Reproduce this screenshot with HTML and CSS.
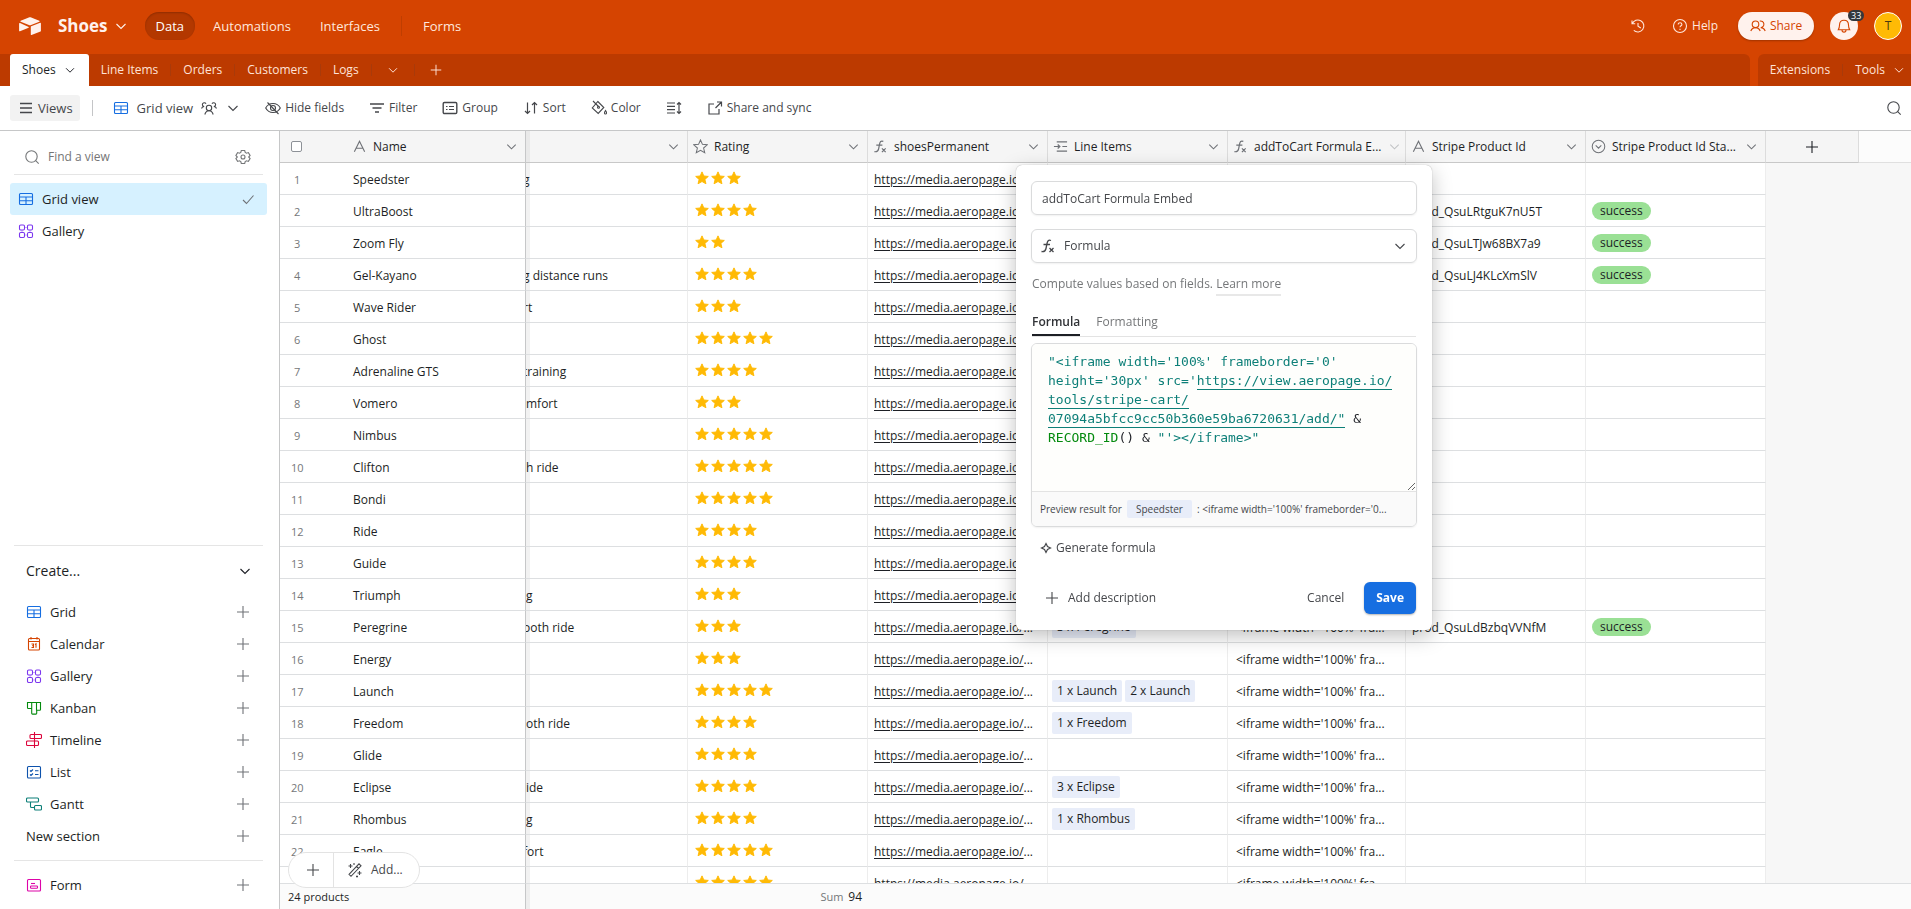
FILE: index.html
```html
<!DOCTYPE html>
<html lang="en">

<head>
  <meta charset="UTF-8" />
  <title>Shoes: Grid view</title>
  <link rel="stylesheet" href="styles.css">
</head>

<body>
  <svg class="sprite" aria-hidden="true">
    <symbol id="i-caret" viewBox="0 0 16 16"><path d="M3.500 6l4.500 4.500L12.500 6" /></symbol>
    <symbol id="i-plus" viewBox="0 0 16 16"><path d="M8 2v12M2 8h12" /></symbol>
    <symbol id="i-check" viewBox="0 0 16 16"><path d="M3 9l3.500 3.500L13.500 4.500" /></symbol>
    <symbol id="i-search" viewBox="0 0 16 16"><circle cx="7.500" cy="7.500" r="5.700" /><path d="M11.700 11.700l3 3" /></symbol>
    <symbol id="i-menu" viewBox="0 0 16 16"><path d="M2 3.500h12M2 8h12M2 12.500h12" stroke-width="1.500" /></symbol>
    <symbol id="i-grid" viewBox="0 0 16 16"><rect x="1.500" y="2.500" width="13" height="11" rx="1" /><path d="M1.500 6h13M1.500 9.700h13M8 6v7.500" /></symbol>
    <symbol id="i-gallery" viewBox="0 0 16 16"><rect x="1.500" y="2" width="5" height="5" rx="1.200" /><rect x="9.500" y="2" width="5" height="5" rx="1.200" /><rect x="1.500" y="9.500" width="5" height="5" rx="1.200" /><rect x="9.500" y="9.500" width="5" height="5" rx="1.200" /><path d="M4 7v2.500M12 7v2.500M6.500 4.500h3M6.500 12h3" opacity="0.400" /></symbol>
    <symbol id="i-calendar" viewBox="0 0 16 16"><rect x="2.500" y="2.500" width="11" height="11.500" rx="1" /><path d="M2.500 5.500h11M5 1v2.500M11 1v2.500M5.500 8h2v3.500h-2M6 9.700h1.500M9 8.500l1-.7v4" /></symbol>
    <symbol id="i-kanban" viewBox="0 0 16 16"><path d="M1.500 2.500h13v7a.8.8 0 0 1-.8.8h-3v3a.8.8 0 0 1-.8.8H6.500a.8.8 0 0 1-.8-.8V8.500H2.300a.8.8 0 0 1-.8-.8zM5.700 2.500v6M10.500 2.500v8" /></symbol>
    <symbol id="i-timeline" viewBox="0 0 16 16"><path d="M8.500 0v16" /><rect x="4" y="2.500" width="11.500" height="4" rx="1" /><rect x=".5" y="9" width="12" height="4.500" rx="1" /></symbol>
    <symbol id="i-list" viewBox="0 0 16 16"><rect x="1.500" y="2.500" width="13" height="11.500" rx="1" /><path d="M4 6.500l1 1 2-2M4 10.500l1 1 2-2M9 6.800h3.500M9 10.500h3.500" /></symbol>
    <symbol id="i-gantt" viewBox="0 0 16 16"><rect x=".5" y="2" width="12" height="4" rx="1" /><rect x="8.500" y="9.500" width="7" height="4.500" rx="1" /><path d="M4.500 6v4.500a1 1 0 0 0 1 1h3" /></symbol>
    <symbol id="i-form" viewBox="0 0 16 16"><rect x="1.500" y="2.500" width="13" height="11.500" rx="1" /><path d="M5 6.500h4" /><rect x="4.500" y="9" width="7" height="2.200" rx=".8" /></symbol>
    <symbol id="i-gear" viewBox="0 0 16 16"><path d="M6.300 1.500h3.400l.5 1.900 1.300.8 1.900-.6 1.700 2.900-1.400 1.500 1.400 1.500-1.700 2.900-1.900-.6-1.300.8-.5 1.900H6.300l-.5-1.900-1.300-.8-1.900.6L.9 9.500 2.300 8 .9 6.500l1.700-2.900 1.900.6 1.300-.8z" /><circle cx="8" cy="8" r="2" /></symbol>
    <symbol id="i-people" viewBox="0 0 16 16"><circle cx="8" cy="8" r="2.700" /><path d="M3.800 14.500c.7-2.300 2.200-3.800 4.200-3.800s3.500 1.500 4.200 3.800M.5 8.500c.4-1.300 1.400-2 2.700-2M15.500 8.500c-.4-1.300-1.400-2-2.700-2M5 3.700a1.900 1.900 0 1 0-1.800 2.800M11 3.700a1.900 1.900 0 1 1 1.800 2.800" /></symbol>
    <symbol id="i-hide" viewBox="0 0 16 16"><path d="M.7 8C2.300 5 4.800 3.500 8 3.500S13.700 5 15.300 8c-1.600 3-4.100 4.500-7.300 4.500S2.300 11 .7 8zM2.500 2.500l11 11.500" /><circle cx="8" cy="8" r="2.500" /></symbol>
    <symbol id="i-filter" viewBox="0 0 16 16"><path d="M1 4h14M3.500 8h9M6 12h4" stroke-width="1.500" /></symbol>
    <symbol id="i-group" viewBox="0 0 16 16"><rect x="1.200" y="2.500" width="13.600" height="11" rx="1.200" stroke-width="1.400" /><path d="M4 6.500h1.500M7 6.500h5M4 9.500h1.500M7 9.500h5" /></symbol>
    <symbol id="i-sort" viewBox="0 0 16 16"><path d="M4.500 2.500v11M2 11l2.500 2.500L7 11M11.500 13.500v-11M9 5l2.500-2.500L14 5" stroke-width="1.200" /></symbol>
    <symbol id="i-color" viewBox="0 0 16 16"><path d="M2 1l5.500 5.500M6.800 1.500l6 6-5.600 6L1.300 8z" /><circle cx="7.500" cy="7.200" r="1" /><path d="M14.500 10.500c1.400 1.800 1.300 3.500 0 3.500s-1.400-1.700 0-3.500z" /></symbol>
    <symbol id="i-height" viewBox="0 0 16 16"><path d="M1 3h8M1 6.300h8M1 9.700h8M1 13h8M13 3v10M11 4.500L13 2.500l2 2M11 11.500l2 2 2-2" stroke-width="1.200" /></symbol>
    <symbol id="i-open" viewBox="0 0 16 16"><path d="M7 4H2v10h10V9M10 2h4.500v4.500M14.500 2L8.500 8" stroke-width="1.200" /></symbol>
    <symbol id="i-history" viewBox="0 0 16 16"><path d="M2 2.500v3.200h3.200M2.300 5.700A6 6 0 1 1 3.800 12.400M8 5v3.300l2.800 1.600" /></symbol>
    <symbol id="i-help" viewBox="0 0 16 16"><circle cx="8" cy="8" r="6.500" /><path d="M6.200 6.500c0-2.400 3.700-2.300 3.700 0 0 1.300-1.900 1.300-1.900 2.800M8 10.700v1.200" /></symbol>
    <symbol id="i-share" viewBox="0 0 16 16"><circle cx="5.500" cy="6.300" r="3.300" /><path d="M.8 13c.9-2.200 2.500-3.400 4.700-3.400s3.800 1.200 4.700 3.400M9.800 3.100a3.300 3.300 0 1 1 .9 6.500c2.200 0 3.600 1.200 4.500 3.400" /></symbol>
    <symbol id="i-bell" viewBox="0 0 16 16"><path d="M3.500 7c0-3 1.800-4.800 4.500-4.800S12.500 4 12.500 7c0 2.700.6 3.700 1.200 4.700H2.300C2.900 10.700 3.500 9.700 3.500 7zM6 12c0 2.800 4 2.800 4 0" /></symbol>
    <symbol id="i-text" viewBox="0 0 16 16"><path d="M2.500 13.500L8 2.500l5.500 11M4.500 9.800h7" stroke-width="1.200" /></symbol>
    <symbol id="i-star" viewBox="0 0 16 16"><path d="M8 1l2.100 4.700 5.100.5-3.900 3.400 1.200 5L8 12l-4.500 2.600 1.200-5L.8 6.200l5.100-.5z" /></symbol>
    <symbol id="i-fx" viewBox="0 0 16 16"><path d="M11 2.500C8.300 1.500 7.500 3 7 5.500L6 10.500C5.500 13 4.500 14 1.500 13.500M3.500 6.500h6.500M9.500 10l4 4M13.500 10l-4 4" stroke-width="1.300" /></symbol>
    <symbol id="i-linked" viewBox="0 0 16 16"><path d="M4 3h11M10 8h5M4 13h11M1 8h6M5 5.800L7.300 8 5 10.200" stroke-width="1.300" /></symbol>
    <symbol id="i-select" viewBox="0 0 16 16"><circle cx="8" cy="8" r="6.700" /><path d="M5 6.800l3 3 3-3" /></symbol>
    <symbol id="i-sparkle" viewBox="0 0 16 16"><path d="M8 3.500L9.500 6.500 12.500 8 9.500 9.500 8 12.500 6.500 9.500 3.500 8 6.500 6.500z" stroke-width="1.200" /></symbol>
    <symbol id="i-wand" viewBox="0 0 16 16"><path d="M2 12.300L12 1.800l2 2L4 14.300zM9.500 4.500l2 2M3.500 2v4M1.500 4h4M12.500 9v4M10.500 11h4M7 1v2M10 13.500v2M9 14.500h2" /></symbol>
  </svg>

  <header class="topbar">
    <svg class="logo" viewBox="0 0 22 18"><path d="M9.800.4L1.700 3.800c-.5.2-.5.8 0 1l8.200 3.200c.7.300 1.500.3 2.200 0l8.200-3.200c.5-.2.500-.8 0-1L12.200.4c-.8-.3-1.600-.3-2.400 0z" /><path d="M11.800 9.700v7.700c0 .4.400.6.700.5l9-3.500c.2-.1.400-.3.400-.5V6.200c0-.4-.4-.6-.7-.5l-9 3.500c-.2.100-.4.300-.4.500z" /><path d="M9.700 10.100L1 6.100c-.4-.2-.9.100-.9.500v7.200c0 .4.500.7.900.5l8.600-3.600c.300-.1.300-.5.100-.6z" /></svg>
    <button class="base-name">Shoes <svg class="icon"><use href="#i-caret" /></svg></button>
    <nav class="main-nav">
      <a href="#" class="active">Data</a>
      <a href="#">Automations</a>
      <a href="#">Interfaces</a>
      <span class="divider"></span>
      <a href="#">Forms</a>
    </nav>
    <div class="account">
      <button class="history" aria-label="History"><svg class="icon"><use href="#i-history" /></svg></button>
      <button class="help"><svg class="icon"><use href="#i-help" /></svg>Help</button>
      <button class="share"><svg class="icon"><use href="#i-share" /></svg>Share</button>
      <button class="bell" aria-label="Notifications"><svg class="icon"><use href="#i-bell" /></svg><span class="badge">33</span></button>
      <button class="avatar">T</button>
    </div>
  </header>

  <div class="tables-bar">
    <nav class="tables">
      <a href="#" class="active">Shoes <svg class="icon"><use href="#i-caret" /></svg></a>
      <a href="#">Line Items</a>
      <a href="#">Orders</a>
      <a href="#">Customers</a>
      <a href="#">Logs</a>
      <button aria-label="All tables"><svg class="icon"><use href="#i-caret" /></svg></button>
      <button aria-label="Add table"><svg class="icon"><use href="#i-plus" /></svg></button>
    </nav>
    <nav class="tables tools">
      <a href="#">Extensions</a>
      <a href="#">Tools <svg class="icon"><use href="#i-caret" /></svg></a>
    </nav>
  </div>

  <div class="toolbar">
    <button class="views"><svg class="icon"><use href="#i-menu" /></svg>Views</button>
    <span class="divider"></span>
    <button class="view-name"><svg class="icon blue"><use href="#i-grid" /></svg>Grid view <svg class="icon"><use href="#i-people" /></svg><svg class="icon"><use href="#i-caret" /></svg></button>
    <div class="tool-list">
      <button><svg class="icon"><use href="#i-hide" /></svg>Hide fields</button>
      <button><svg class="icon"><use href="#i-filter" /></svg>Filter</button>
      <button><svg class="icon"><use href="#i-group" /></svg>Group</button>
      <button><svg class="icon"><use href="#i-sort" /></svg>Sort</button>
      <button><svg class="icon"><use href="#i-color" /></svg>Color</button>
      <button aria-label="Row height"><svg class="icon"><use href="#i-height" /></svg></button>
      <button><svg class="icon"><use href="#i-open" /></svg>Share and sync</button>
    </div>
    <button class="find" aria-label="Find"><svg class="icon"><use href="#i-search" /></svg></button>
  </div>

  <main class="workspace">
    <aside class="sidebar">
      <div class="find-view">
        <svg class="icon"><use href="#i-search" /></svg>
        <input type="text" aria-label="Find a view" placeholder="Find a view">
        <button aria-label="View settings"><svg class="icon"><use href="#i-gear" /></svg></button>
      </div>
      <nav class="view-list">
        <a href="#" class="active"><svg class="icon blue"><use href="#i-grid" /></svg>Grid view<svg class="icon end"><use href="#i-check" /></svg></a>
        <a href="#"><svg class="icon purple"><use href="#i-gallery" /></svg>Gallery</a>
      </nav>
      <div class="create">
        <button class="create-title">Create...<svg class="icon end"><use href="#i-caret" /></svg></button>
        <button><svg class="icon blue"><use href="#i-grid" /></svg>Grid<svg class="icon end"><use href="#i-plus" /></svg></button>
        <button><svg class="icon orange"><use href="#i-calendar" /></svg>Calendar<svg class="icon end"><use href="#i-plus" /></svg></button>
        <button><svg class="icon purple"><use href="#i-gallery" /></svg>Gallery<svg class="icon end"><use href="#i-plus" /></svg></button>
        <button><svg class="icon green"><use href="#i-kanban" /></svg>Kanban<svg class="icon end"><use href="#i-plus" /></svg></button>
        <button><svg class="icon red"><use href="#i-timeline" /></svg>Timeline<svg class="icon end"><use href="#i-plus" /></svg></button>
        <button><svg class="icon navy"><use href="#i-list" /></svg>List<svg class="icon end"><use href="#i-plus" /></svg></button>
        <button><svg class="icon teal"><use href="#i-gantt" /></svg>Gantt<svg class="icon end"><use href="#i-plus" /></svg></button>
        <button>New section<svg class="icon end"><use href="#i-plus" /></svg></button>
      </div>
      <div class="create">
        <button><svg class="icon pink"><use href="#i-form" /></svg>Form<svg class="icon end"><use href="#i-plus" /></svg></button>
      </div>
    </aside>

    <section class="grid">
      <table>
        <colgroup>
          <col class="col-num">
          <col class="col-name">
          <col class="col-desc">
          <col class="col-field">
          <col class="col-field">
          <col class="col-field">
          <col class="col-cart">
          <col class="col-field">
          <col class="col-field">
          <col class="col-add">
          <col>
        </colgroup>
        <thead>
          <tr>
            <th><input type="checkbox" aria-label="Select all rows"></th>
            <th class="frozen"><div class="field"><svg class="icon"><use href="#i-text" /></svg><span>Name</span><svg class="icon caret"><use href="#i-caret" /></svg></div></th>
            <th class="shade"><div class="field"><svg class="icon caret"><use href="#i-caret" /></svg></div></th>
            <th><div class="field"><svg class="icon"><use href="#i-star" /></svg><span>Rating</span><svg class="icon caret"><use href="#i-caret" /></svg></div></th>
            <th><div class="field"><svg class="icon"><use href="#i-fx" /></svg><span>shoesPermanent</span><svg class="icon caret"><use href="#i-caret" /></svg></div></th>
            <th><div class="field"><svg class="icon"><use href="#i-linked" /></svg><span>Line Items</span><svg class="icon caret"><use href="#i-caret" /></svg></div></th>
            <th><div class="field open"><svg class="icon"><use href="#i-fx" /></svg><span>addToCart Formula E...</span><svg class="icon caret"><use href="#i-caret" /></svg></div></th>
            <th><div class="field"><svg class="icon"><use href="#i-text" /></svg><span>Stripe Product Id</span><svg class="icon caret"><use href="#i-caret" /></svg></div></th>
            <th><div class="field"><svg class="icon"><use href="#i-select" /></svg><span>Stripe Product Id Sta...</span><svg class="icon caret"><use href="#i-caret" /></svg></div></th>
            <th class="add-field"><button aria-label="Add field"><svg class="icon"><use href="#i-plus" /></svg></button></th>
            <th class="rest"></th>
          </tr>
        </thead>
        <tbody id="rows"></tbody>
        <tfoot>
          <tr>
            <td colspan="2" class="count frozen">24 products</td>
            <td class="shade"></td>
            <td class="sum">Sum <b>94</b></td>
            <td colspan="7"></td>
          </tr>
        </tfoot>
      </table>

      <div class="add-record">
        <button aria-label="Add record"><svg class="icon"><use href="#i-plus" /></svg></button>
        <button><svg class="icon"><use href="#i-wand" /></svg>Add...</button>
      </div>

      <form class="popup">
        <input class="box" type="text" aria-label="Field name" value="addToCart Formula Embed">
        <div class="box type">
          <svg class="icon"><use href="#i-fx" /></svg>
          <select aria-label="Field type">
            <option>Formula</option>
          </select>
          <svg class="icon"><use href="#i-caret" /></svg>
        </div>
        <p class="hint">Compute values based on fields. <a href="#">Learn more</a></p>
        <div class="tabs">
          <button type="button" class="active">Formula</button>
          <button type="button">Formatting</button>
        </div>
        <div class="box editor">
          <div class="code" contenteditable="true" role="textbox" aria-label="Formula" spellcheck="false"><span class="str">"&lt;iframe width='100%' frameborder='0'<br>height='30px' src='<u>https://view.aeropage.io/</u><br><u>tools/stripe-cart/</u><br><u>07094a5bfcc9cc50b360e59ba6720631/add/"</u></span> &amp;<br><span class="fn">RECORD_ID</span>() &amp; <span class="str">"'&gt;&lt;/iframe&gt;"</span></div>
          <div class="preview">
            <span>Preview result for</span>
            <span class="chip">Speedster</span>
            <span>: &lt;iframe width='100%' frameborder='0...</span>
          </div>
        </div>
        <button type="button" class="generate"><svg class="icon"><use href="#i-sparkle" /></svg>Generate formula</button>
        <div class="actions">
          <button type="button" class="describe"><svg class="icon"><use href="#i-plus" /></svg>Add description</button>
          <button type="button">Cancel</button>
          <button type="submit" class="save">Save</button>
        </div>
      </form>
    </section>
  </main>

  <script src="script.js"></script>
</body>

</html>
```

FILE: styles.css
```css
* {
  box-sizing: border-box;
}

body {
  margin: 0;
  height: 100vh;
  display: flex;
  flex-direction: column;
  overflow: hidden;
  font-family: "Segoe UI", "Open Sans", "Noto Sans", sans-serif;
  font-size: 12px;
  line-height: 18px;
  color: #1d1f25;
  background: #fff;
}

button,
input,
select {
  font: inherit;
  color: inherit;
  border: none;
  background: none;
  padding: 0;
  margin: 0;
}

button {
  display: flex;
  align-items: center;
  cursor: pointer;
  white-space: nowrap;
}

a {
  color: inherit;
  text-decoration: none;
  white-space: nowrap;
}

.sprite {
  display: none;
}

.icon {
  width: 16px;
  height: 16px;
  flex: none;
  fill: none;
  stroke: currentColor;
  stroke-width: 1.1;
}

.blue { color: #166ee1; }
.purple { color: #7c37ef; }
.orange { color: #d54401; }
.green { color: #048a0e; }
.red { color: #dc043b; }
.navy { color: #0d52ac; }
.teal { color: #0d7f78; }
.pink { color: #dd04a8; }

/* top bar */

.topbar {
  display: flex;
  align-items: center;
  flex: none;
  height: 54px;
  padding: 0 9px 2px 19px;
  background: #d54401;
  color: #ffe8de;
}

.logo {
  width: 22px;
  height: 18px;
  fill: #fff2ed;
}

.base-name {
  margin-left: 17px;
  gap: 5px;
  color: #fff2ed;
  font-size: 17px;
  font-weight: 700;
}

.main-nav {
  display: flex;
  align-items: center;
  gap: 7px;
  margin-left: 16px;
  font-size: 13px;
}

.main-nav a {
  padding: 5px 11px;
  border-radius: 14px;
}

.main-nav .active {
  background: #b33800;
  color: #fff;
  box-shadow: inset 0 1px 2px rgba(0, 0, 0, 0.2);
}

.main-nav .divider {
  width: 1px;
  height: 20px;
  margin: 0 3px;
  background: #bf3e01;
}

.account {
  display: flex;
  align-items: center;
  gap: 16px;
  margin-left: auto;
}

.account button {
  height: 28px;
  justify-content: center;
  gap: 4px;
}

.account .history {
  margin-right: 10px;
}

.account .help {
  margin-right: 4px;
}

.account .share {
  width: 76px;
  border-radius: 14px;
  background: #fff2ed;
  color: #d54401;
  box-shadow: 0 1px 2px rgba(0, 0, 0, 0.25);
}

.account .bell {
  position: relative;
  width: 28px;
  border-radius: 50%;
  background: #fff2ed;
  color: #d54401;
}

.badge {
  position: absolute;
  top: -2px;
  left: 18px;
  padding: 0 3px;
  border-radius: 6px;
  background: #33373d;
  color: #fff;
  font-size: 9px;
  line-height: 11px;
}

.account .avatar {
  width: 28px;
  border: 1px solid #fff;
  border-radius: 50%;
  background: #ffba05;
  color: #4a3a10;
}

/* table tabs */

.tables-bar {
  display: flex;
  flex: none;
  gap: 8px;
  height: 32px;
  background: #d54401;
}

.tables {
  display: flex;
  align-items: center;
  flex: 1;
  padding-left: 10px;
  border-top-right-radius: 6px;
  background: #bc3a00;
  color: #ffe3d8;
  line-height: 20px;
}

.tables a,
.tables button {
  display: flex;
  align-items: center;
  gap: 7px;
  height: 12px;
  padding: 0 12px;
  border-right: 1px solid #a93a0a;
}

.tables button {
  padding: 0 14px;
}

.tables .active {
  height: 32px;
  border-right: none;
  border-radius: 3px 3px 0 0;
  background: #fff;
  color: #1d1f25;
}

.tables .icon {
  width: 14px;
}

.tables > :last-child {
  border-right: none;
}

.tools {
  flex: none;
  padding-left: 0;
  border-radius: 6px 0 0 0;
}

.tools a:last-child {
  padding-right: 5px;
}

/* toolbar */

.toolbar {
  display: flex;
  align-items: center;
  flex: none;
  height: 45px;
  padding: 0 9px 0 10px;
  border-bottom: 1px solid #c6c7c8;
  color: #45474b;
}

.toolbar .views {
  height: 26px;
  padding: 0 7px 0 8px;
  gap: 4px;
  border-radius: 3px;
  background: #f2f2f2;
  font-size: 13px;
}

.toolbar .divider {
  width: 1px;
  height: 16px;
  margin: 0 20px 0 12px;
  background: #c4c5c7;
}

.view-name {
  gap: 8px;
  font-size: 13px;
}

.tool-list {
  display: flex;
  gap: 25px;
  margin-left: 24px;
}

.tool-list button {
  gap: 4px;
}

.find {
  margin-left: auto;
}

/* workspace */

.workspace {
  display: flex;
  flex: 1;
  min-height: 0;
}

.sidebar {
  display: flex;
  flex-direction: column;
  flex: none;
  width: 280px;
  padding: 11px 12px 8px 10px;
  border-right: 1px solid #c6c7c8;
  font-size: 13px;
}

.find-view {
  display: flex;
  align-items: center;
  height: 33px;
  margin: 0 4px 8px;
  padding: 0 12px 2px 10px;
  border-bottom: 1px solid #e5e5e5;
  color: #757779;
  font-size: 12px;
}

.find-view input {
  flex: 1;
  min-width: 0;
  padding-left: 8px;
}

.find-view input::placeholder {
  color: #757575;
}

.view-list a {
  display: flex;
  align-items: center;
  gap: 8px;
  height: 32px;
  padding: 0 11px 0 8px;
  border-radius: 3px;
}

.view-list .active {
  background: #d6f1ff;
}

.end {
  margin-left: auto;
  color: #6f7277;
}

.create {
  margin: 0 4px;
  border-top: 1px solid #e5e5e5;
}

.create button {
  width: 100%;
  height: 32px;
  padding: 0 12px;
  gap: 8px;
}

.view-list + .create {
  margin-top: auto;
  margin-bottom: 8px;
}

.create:last-child {
  padding-top: 8px;
}

.create .create-title {
  height: 50px;
  padding: 0 10px 0 12px;
  font-size: 14px;
}

.create-title .end {
  color: #1d1f25;
}

/* grid */

.grid {
  position: relative;
  flex: 1;
  min-width: 0;
  overflow: hidden;
  background: #f7f7f7;
}

table {
  width: 100%;
  min-width: 1579px;
  height: 100%;
  table-layout: fixed;
  border-collapse: separate;
  border-spacing: 0;
}

.col-num { width: 65px; }
.col-name { width: 181px; }
.col-desc { width: 162px; }
.col-field { width: 180px; }
.col-cart { width: 178px; }
.col-add { width: 93px; }

th {
  position: sticky;
  top: 0;
  z-index: 1;
  height: 32px;
  padding: 0;
  border-right: 1px solid #dcdcdc;
  border-bottom: 1px solid #c8c8c8;
  background: #f5f5f5;
  font-weight: 400;
  text-align: left;
}

th:first-child {
  border-right: none;
}

th input {
  display: block;
  appearance: none;
  width: 11px;
  height: 11px;
  margin-left: 11px;
  outline: 1px solid #8d9197;
  outline-offset: -1px;
  border-radius: 2px;
  background: #fff;
}

.add-field button {
  width: 100%;
  justify-content: center;
}

.rest {
  border-right: none;
  border-color: #e0e0e0;
  background: #fcfcfc;
}

.field {
  display: flex;
  align-items: center;
  gap: 6px;
  padding: 0 6px 0 5px;
}

.field span {
  padding-top: 1px;
  white-space: nowrap;
}

.field .icon {
  width: 15px;
  height: 15px;
  color: #6f7277;
}

.field .caret {
  margin-left: auto;
}

.open .caret {
  color: #c0c2c4;
}

.frozen .field {
  padding-left: 7px;
}

tbody td {
  height: 32px;
  padding: 2px 0 0 6px;
  border-right: 1px solid #ededed;
  border-bottom: 1px solid #dddfe1;
  background: #fff;
  overflow: hidden;
  white-space: nowrap;
}

tbody td.num {
  padding-left: 11px;
  border-right: none;
  color: #757779;
  font-size: 11px;
}

tbody td.num.short {
  padding-left: 14px;
}

tbody td.name {
  padding-left: 8px;
}

tbody td.desc {
  padding-left: 0;
}

.cut {
  text-indent: -3px;
}

th.frozen,
td.frozen {
  border-right: 1px solid #c6c7c8;
}

th.shade,
tbody td.shade,
tfoot td.shade {
  background-image: linear-gradient(to right, rgba(0, 0, 0, 0.05) 4px, transparent 4px);
}

td.url a {
  text-decoration: underline;
  text-underline-offset: 2px;
}

tbody td.cart {
  padding-left: 8px;
}

tbody td.links {
  padding: 0 0 0 4px;
}

.link {
  display: inline-block;
  height: 22px;
  margin-right: 3px;
  padding: 2px 5px;
  border-radius: 2px;
  background: #e8edf9;
}

tbody td.stars {
  padding: 0 0 2px 7px;
}

.stars div {
  display: flex;
  gap: 2px;
}

.stars .icon {
  width: 14px;
  height: 14px;
  fill: #ffba05;
  stroke: #ffba05;
}

tbody td.state {
  padding-top: 0;
}

.status {
  display: inline-block;
  padding: 0 8px;
  border-radius: 9px;
  background: #9ae095;
}

tbody td.blank {
  border: none;
  background: #f7f7f7;
}

tfoot td {
  position: sticky;
  bottom: 0;
  z-index: 1;
  height: 26px;
  padding: 0 6px;
  border-top: 1px solid #dddfe1;
  background: #fbfbfb;
  font-size: 11px;
  white-space: nowrap;
}

tfoot .count {
  padding-left: 8px;
}

tfoot .sum {
  color: #757779;
  text-align: right;
}

.sum b {
  margin-left: 2px;
  color: #1d1f25;
  font-size: 12px;
  font-weight: 400;
}

/* floating add button over the rows */

.add-record {
  position: absolute;
  left: 8px;
  bottom: 21px;
  z-index: 2;
  display: flex;
  height: 36px;
  border: 1px solid #e3e3e3;
  border-radius: 18px;
  background: #fff;
  color: #45474b;
}

.add-record button {
  padding: 0 16px 0 13px;
  gap: 8px;
}

.add-record button:first-child {
  padding: 0 12px 0 16px;
  border-right: 1px solid #e3e3e3;
}

/* formula field popup */

.popup {
  position: absolute;
  top: 34px;
  left: 736px;
  z-index: 3;
  width: 416px;
  padding: 16px 15px;
  border-radius: 6px;
  background: #fff;
  color: #45474b;
  box-shadow: 0 0 1px rgba(0, 0, 0, 0.4), 0 6px 20px rgba(0, 0, 0, 0.25);
}

.box {
  width: 100%;
  height: 34px;
  padding: 0 10px;
  border: 1px solid #dadbdc;
  border-radius: 6px;
  box-shadow: 0 1px 2px rgba(0, 0, 0, 0.06);
}

.popup > .box {
  display: flex;
}

.popup .type {
  align-items: center;
  margin-top: 14px;
  padding: 0 8px;
}

.type select {
  flex: 1;
  margin-left: 8px;
  appearance: none;
}

.hint {
  margin: 12px 1px 0;
  color: #757779;
}

.hint a {
  padding-bottom: 2px;
  border-bottom: 2px solid #e8e8e8;
}

.tabs {
  display: flex;
  gap: 16px;
  margin: 18px 1px 6px;
  border-bottom: 1px solid #e3e3e3;
}

.tabs button {
  height: 25px;
  padding-bottom: 4px;
  color: #757779;
}

.tabs .active {
  padding-bottom: 2px;
  border-bottom: 2px solid #1d1f25;
  color: #303236;
  font-weight: 600;
}

.popup .editor {
  flex-direction: column;
  height: auto;
  padding: 0;
  overflow: hidden;
}

.code {
  height: 147px;
  padding: 8px 16px;
  overflow: auto;
  resize: vertical;
  background: #fefefc;
  color: #1d1f25;
  font-family: Consolas, "DejaVu Sans Mono", monospace;
  font-size: 13px;
  line-height: 19px;
  white-space: pre;
}

.str {
  color: #0d7f78;
}

.str u {
  padding-bottom: 1px;
  border-bottom: 1px solid #0d7f78;
  text-decoration: none;
}

.fn {
  color: #048a0e;
}

.preview {
  display: flex;
  align-items: center;
  gap: 5px;
  height: 35px;
  padding-left: 8px;
  border-top: 1px solid #e3e3e3;
  background: #fafafa;
  font-size: 10px;
  white-space: nowrap;
}

.chip {
  padding: 0 9px;
  border-radius: 2px;
  background: #e8edf9;
}

.generate {
  gap: 2px;
  margin: 12px 7px 0;
}

.actions {
  display: flex;
  align-items: center;
  gap: 20px;
  margin-top: 25px;
}

.describe {
  gap: 8px;
  margin-left: 13px;
  margin-right: auto;
}

.save {
  height: 32px;
  margin-right: 1px;
  padding: 0 12px;
  border-radius: 6px;
  background: #166ee1;
  color: #fff;
  font-weight: 700;
  box-shadow: 0 1px 2px rgba(0, 0, 0, 0.3);
}
```

FILE: script.js
```js
// name, rating, end of the description, first letter cut, line items, stripe id
const products = [
  ['Speedster', 3, 'g', true],
  ['UltraBoost', 4, '', false, [], 'prod_QsuLRtguK7nU5T'],
  ['Zoom Fly', 2, '', false, [], 'prod_QsuLTJw68BX7a9'],
  ['Gel-Kayano', 4, 'g distance runs', true, [], 'prod_QsuLJ4KLcXmSlV'],
  ['Wave Rider', 3, 'rt', true],
  ['Ghost', 5],
  ['Adrenaline GTS', 4, 'training', true],
  ['Vomero', 3, 'mfort'],
  ['Nimbus', 5],
  ['Clifton', 5, 'h ride'],
  ['Bondi', 5],
  ['Ride', 4],
  ['Guide', 4],
  ['Triumph', 3, 'g'],
  ['Peregrine', 3, 'ooth ride', true, ['3 x Peregrine'], 'prod_QsuLdBzbqVVNfM'],
  ['Energy', 3],
  ['Launch', 5, '', false, ['1 x Launch', '2 x Launch']],
  ['Freedom', 4, 'oth ride', false, ['1 x Freedom']],
  ['Glide', 4],
  ['Eclipse', 4, 'ide', false, ['3 x Eclipse']],
  ['Rhombus', 4, 'g', false, ['1 x Rhombus']],
  ['Eagle', 5, 'fort', true],
  ['', 5]
];

const star = '<svg class="icon"><use href="#i-star" /></svg>';

document.getElementById('rows').innerHTML = products.map((product, i) => {
  const [name, rating, desc = '', cut = false, links = [], stripeId = ''] = product;
  return `
    <tr>
      <td class="num ${i < 9 ? 'short' : ''}">${name ? i + 1 : ''}</td>
      <td class="name frozen">${name}</td>
      <td class="desc shade ${cut ? 'cut' : ''}">${desc}</td>
      <td class="stars"><div>${star.repeat(rating)}</div></td>
      <td class="url"><a href="#">https://media.aeropage.io/</a>...</td>
      <td class="links">${links.map(link => `<span class="link">${link}</span>`).join('')}</td>
      <td class="cart">&lt;iframe width='100%' fra...</td>
      <td>${stripeId}</td>
      <td class="state">${stripeId ? '<span class="status">success</span>' : ''}</td>
      <td class="blank" colspan="2"></td>
    </tr>`;
}).join('');
```
